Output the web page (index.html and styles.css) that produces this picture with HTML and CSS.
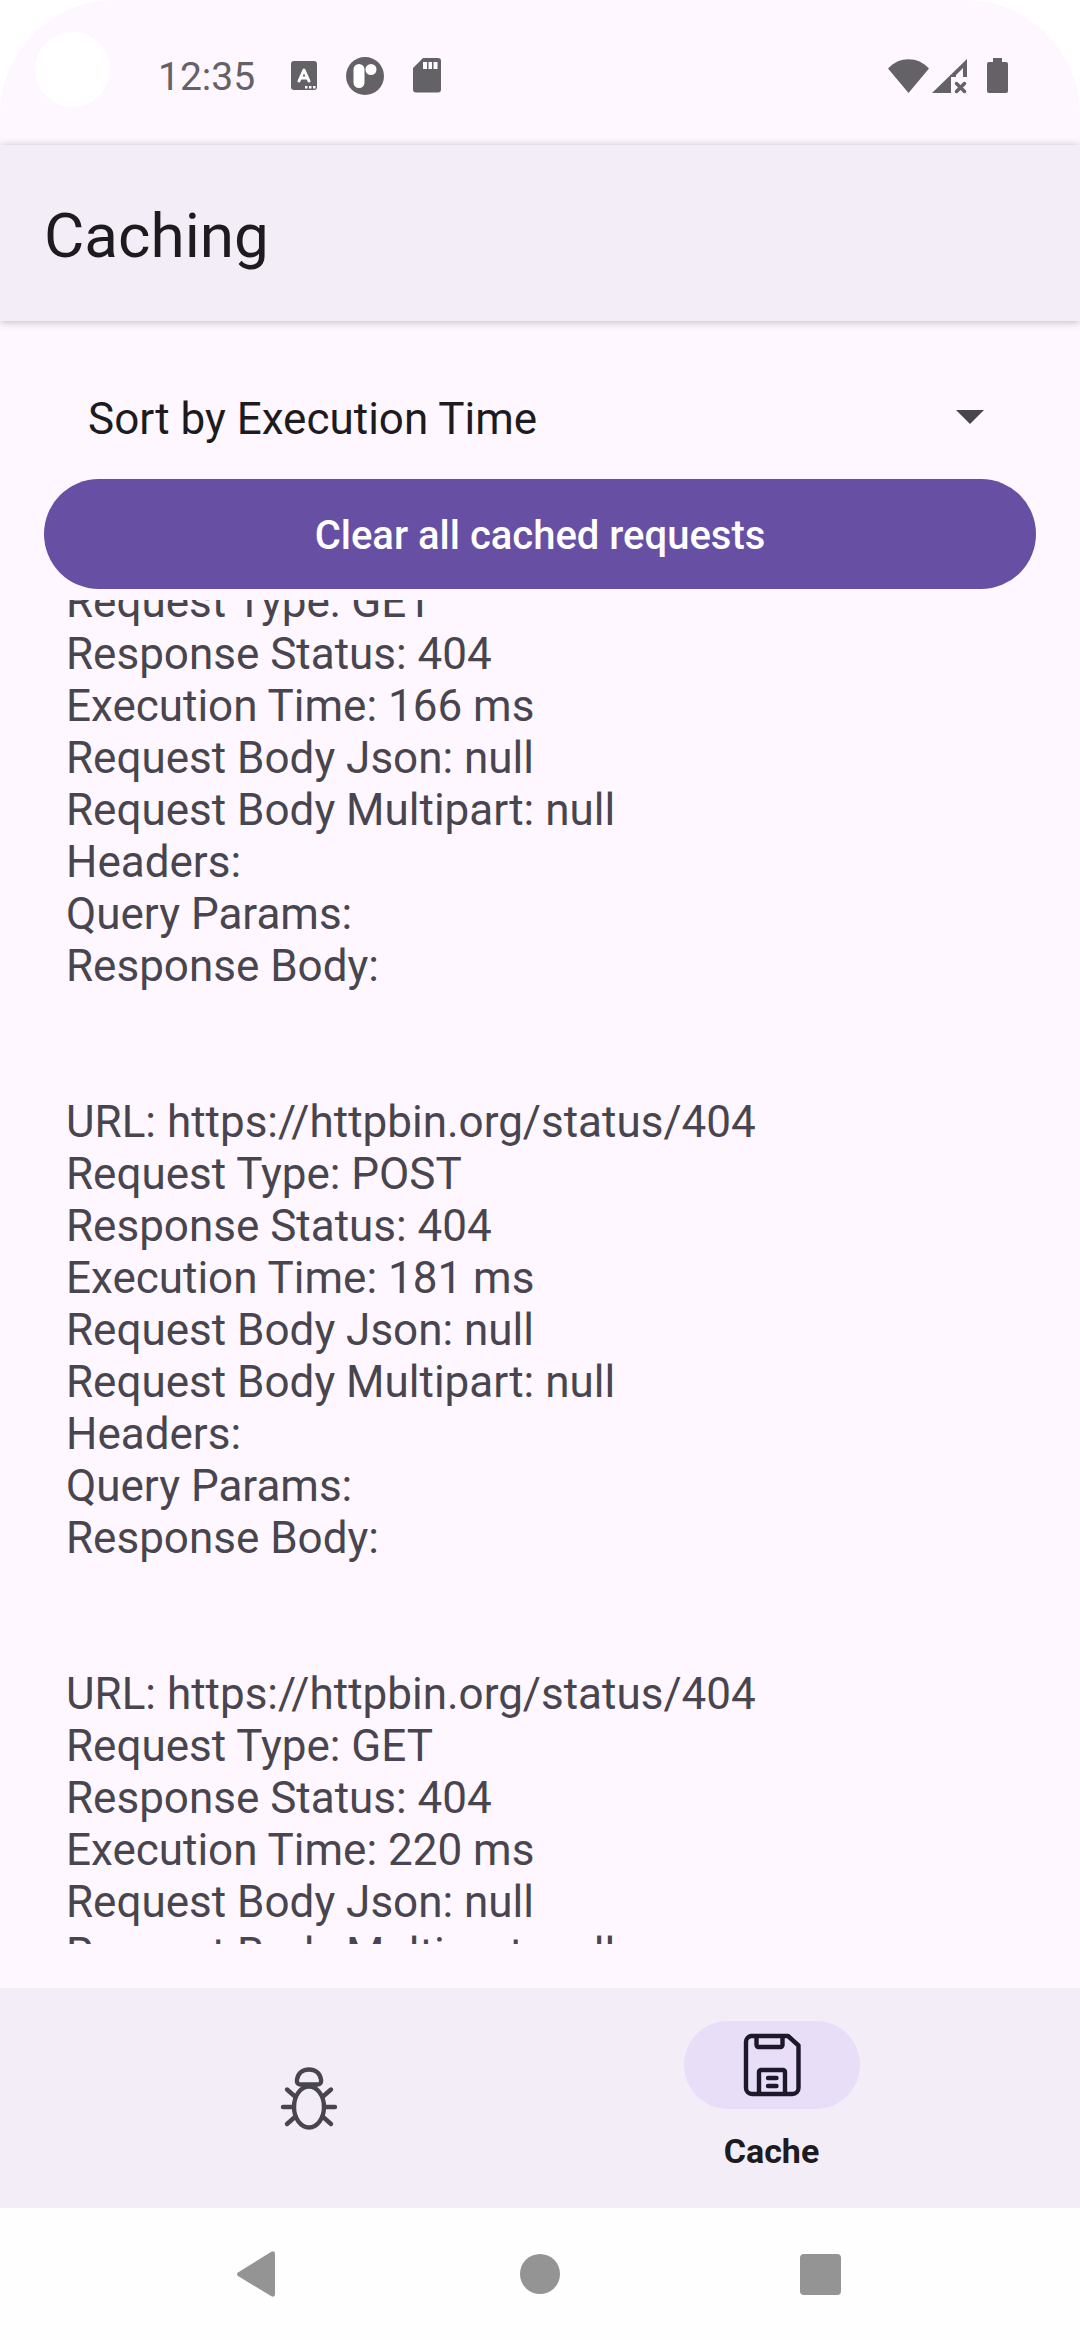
FILE: index.html
```html
<!DOCTYPE html>
<html lang="en">
<head>
<meta charset="utf-8">
<meta name="viewport" content="width=device-width, initial-scale=1">
<title>Caching</title>
<link rel="stylesheet" href="styles.css">
</head>
<body>
<div class="screen">
  <header class="status-bar">
    <span class="camera"></span>
    <time class="clock">12:35</time>
    <div class="status-icons">
      <svg width="26" height="30" viewBox="0 0 26 30" aria-hidden="true">
        <rect width="26" height="29" rx="3" fill="#646266"/>
        <path d="M8 20 13 9l5 11M9.500 17h7" fill="none" stroke="#fff" stroke-width="3" stroke-linecap="round" stroke-linejoin="round"/>
        <path d="M14 25h2.500v2.500H14zM18 25h2.500v2.500H18zM22 25h2.500v2.500H22z" fill="#fff"/>
      </svg>
      <svg width="38" height="38" viewBox="0 0 38 38" aria-hidden="true">
        <circle cx="19" cy="19" r="19" fill="#646266"/>
        <rect x="7.500" y="7" width="11" height="24" rx="5.500" fill="#fff"/>
        <circle cx="25" cy="12.500" r="5.500" fill="#fff"/>
      </svg>
      <svg width="28" height="35" viewBox="0 0 28 35" aria-hidden="true">
        <path d="M10 0h15a3 3 0 0 1 3 3v28.500a3 3 0 0 1-3 3H3a3 3 0 0 1-3-3V10z" fill="#646266"/>
        <path d="M10 4h4v7h-4zM15.500 4h3.500v7h-3.500zM20.500 4h4v7h-4z" fill="#fff"/>
      </svg>
    </div>
    <div class="signal-icons">
      <svg width="41" height="36" viewBox="0 0 41 36" aria-hidden="true">
        <path d="M0 10.500C11-2 30-2 41 10.500L20.500 35z" fill="#646266"/>
      </svg>
      <svg width="35" height="36" viewBox="0 0 35 36" aria-hidden="true">
        <path d="M0 35 35 1v18h-4V10l-7 7v2h-5v16z" fill="#646266"/>
        <path d="m24.500 25.500 8 8m0-8-8 8" fill="none" stroke="#646266" stroke-width="3.500" stroke-linecap="round"/>
      </svg>
      <svg class="battery" width="21" height="36" viewBox="0 0 21 36" aria-hidden="true">
        <path d="M6 0h9v4h4a2 2 0 0 1 2 2v27a2 2 0 0 1-2 2H2a2 2 0 0 1-2-2V6a2 2 0 0 1 2-2h4z" fill="#646266"/>
      </svg>
    </div>
  </header>

  <div class="app-bar"><h1 class="title">Caching</h1></div>

  <main class="content">
    <div class="sort">
      <select class="sort-select" aria-label="Sort order">
        <option>Sort by Execution Time</option>
      </select>
      <svg class="sort-arrow" width="28" height="18" viewBox="0 0 28 18" aria-hidden="true"><path d="M0 0h28L14 14z" fill="#49454f"/></svg>
    </div>
    <button class="clear-button" type="button">Clear all cached requests</button>
    <div class="list-viewport">
      <ul class="list">
        <li class="entry">
          <div>Request Type: GET</div>
          <div>Response Status: 404</div>
          <div>Execution Time: 166 ms</div>
          <div>Request Body Json: null</div>
          <div>Request Body Multipart: null</div>
          <div>Headers:</div>
          <div>Query Params:</div>
          <div>Response Body:</div>
        </li>
        <li class="entry">
          <div>URL: https://httpbin.org/status/404</div>
          <div>Request Type: POST</div>
          <div>Response Status: 404</div>
          <div>Execution Time: 181 ms</div>
          <div>Request Body Json: null</div>
          <div>Request Body Multipart: null</div>
          <div>Headers:</div>
          <div>Query Params:</div>
          <div>Response Body:</div>
        </li>
        <li class="entry">
          <div>URL: https://httpbin.org/status/404</div>
          <div>Request Type: GET</div>
          <div>Response Status: 404</div>
          <div>Execution Time: 220 ms</div>
          <div>Request Body Json: null</div>
          <div>Request Body Multipart: null</div>
        </li>
      </ul>
    </div>
  </main>

  <nav class="tabs">
    <a class="tab" href="#requests" aria-label="Requests">
      <svg width="60" height="64" viewBox="0 0 60 64" fill="none" stroke="#49454f" stroke-width="4.400" stroke-linecap="round" stroke-linejoin="round" aria-hidden="true">
        <path d="M21.500 18.500c-3 0-4-2-3.500-5C19 7 24 3.500 30 3.500S41 7 42 13.500c.500 3-.500 5-3.500 5z"/>
        <ellipse cx="30" cy="41" rx="15" ry="20.500"/>
        <path d="M4 41h11M45 41h11M8 23.500l8 7M52 23.500l-8 7M8 58l8.500-7.500M52 58l-8.500-7.500"/>
      </svg>
    </a>
    <a class="tab" href="#cache" aria-current="page">
      <span class="tab-pill">
        <svg width="58" height="64" viewBox="0 0 58 64" fill="none" stroke="#1d192b" stroke-width="4.400" stroke-linecap="round" stroke-linejoin="round" aria-hidden="true">
          <path d="M8 3h37l10.500 9.500V55a6 6 0 0 1-6 6H9a6 6 0 0 1-6-6V9a6 6 0 0 1 5-6z"/>
          <path d="M13.500 4v8a2 2 0 0 0 2 2h22a2 2 0 0 0 2-2V4M16 60V39a2 2 0 0 1 2-2h22a2 2 0 0 1 2 2v21M25 45h8.500M25 53h8.500"/>
        </svg>
      </span>
      <span class="tab-label">Cache</span>
    </a>
  </nav>

  <footer class="system-nav">
    <button class="system-button" type="button" aria-label="Back">
      <svg width="46" height="46" viewBox="0 0 46 46" aria-hidden="true"><path d="M1 21.500 34 1q4-2 4 2v40q0 4-4 2L1 25q-2-2 0-3.500z" fill="#949494"/></svg>
    </button>
    <button class="system-button" type="button" aria-label="Home">
      <svg width="42" height="42" viewBox="0 0 42 42" aria-hidden="true"><circle cx="21" cy="21" r="20" fill="#949494"/></svg>
    </button>
    <button class="system-button" type="button" aria-label="Overview">
      <svg width="42" height="42" viewBox="0 0 42 42" aria-hidden="true"><rect width="41" height="41" x="1" y="1" rx="4" fill="#949494"/></svg>
    </button>
  </footer>
</div>
</body>
</html>
```
FILE: styles.css
```css
* {
  box-sizing: border-box;
}

body {
  margin: 0;
  background: #fff;
  font-family: Roboto, sans-serif;
  color: #1d1b20;
}

button,
select {
  border: 0;
  padding: 0;
  background: none;
  color: inherit;
  font: inherit;
}

svg {
  display: block;
  flex: none;
}

.screen {
  display: flex;
  flex-direction: column;
  height: 100vh;
  overflow: hidden;
  border-radius: 115px 115px 0 0;
  background: #fef7ff;
}

.status-bar {
  display: flex;
  align-items: center;
  height: 145px;
  padding: 6px 72px 0 35px;
}

.camera {
  width: 75px;
  height: 75px;
  margin: 0 48px 12px 0;
  border-radius: 50%;
  background: #fff;
}

.clock {
  padding-top: 2px;
  color: #646266;
  font-size: 39px;
}

.status-icons {
  display: flex;
  align-items: center;
  gap: 29px;
  margin-left: 36px;
}

.signal-icons {
  display: flex;
  align-items: center;
  gap: 3px;
  margin-left: auto;
}

.battery {
  margin-left: 17px;
}

.app-bar {
  display: flex;
  align-items: center;
  height: 176px;
  padding: 4px 44px 0;
  background: #f3edf7;
  box-shadow: 0 1px 8px rgba(0, 0, 0, 0.25);
}

.title {
  margin: 0;
  font-size: 62px;
  font-weight: 400;
}

.content {
  display: flex;
  flex: 1;
  flex-direction: column;
  min-height: 0;
  padding: 44px;
}

.sort {
  display: grid;
  align-items: center;
  margin-bottom: 6px;
}

.sort-select,
.sort-arrow {
  grid-area: 1 / 1;
}

.sort-select {
  width: 100%;
  height: 108px;
  padding: 0 44px;
  appearance: none;
  font-size: 44px;
  line-height: 52px;
}

.sort-arrow {
  justify-self: end;
  margin-right: 52px;
  pointer-events: none;
}

.clear-button {
  flex: none;
  height: 110px;
  margin-bottom: 11px;
  padding-top: 2px;
  border-radius: 55px;
  background: #6750a4;
  color: #fff;
  font-size: 40px;
  font-weight: 500;
}

.list-viewport {
  flex: 1;
  min-height: 0;
  overflow: hidden;
}

/* The list is scrolled part of the way into its first entry. */
.list {
  margin: -24px 0 0;
  padding: 0 22px;
  list-style: none;
  color: #49454f;
  font-size: 44px;
  line-height: 52px;
}

.entry {
  padding-bottom: 104px;
}

.tabs {
  display: flex;
  justify-content: center;
  height: 220px;
  background: #f3edf7;
}

.tab {
  display: flex;
  flex: 1;
  flex-direction: column;
  align-items: center;
  justify-content: center;
  gap: 22px;
  max-width: 463px;
  color: inherit;
  text-decoration: none;
}

.tab-pill {
  display: flex;
  align-items: center;
  justify-content: center;
  width: 176px;
  height: 88px;
  border-radius: 44px;
  background: #e8def8;
}

.tab-label {
  padding-bottom: 4px;
  font-size: 34px;
  font-weight: 700;
  line-height: 40px;
}

.system-nav {
  display: flex;
  justify-content: center;
  height: 132px;
  background: #fefefe;
}

.system-button {
  display: flex;
  flex: 1;
  align-items: center;
  justify-content: center;
  max-width: 280px;
}
```
